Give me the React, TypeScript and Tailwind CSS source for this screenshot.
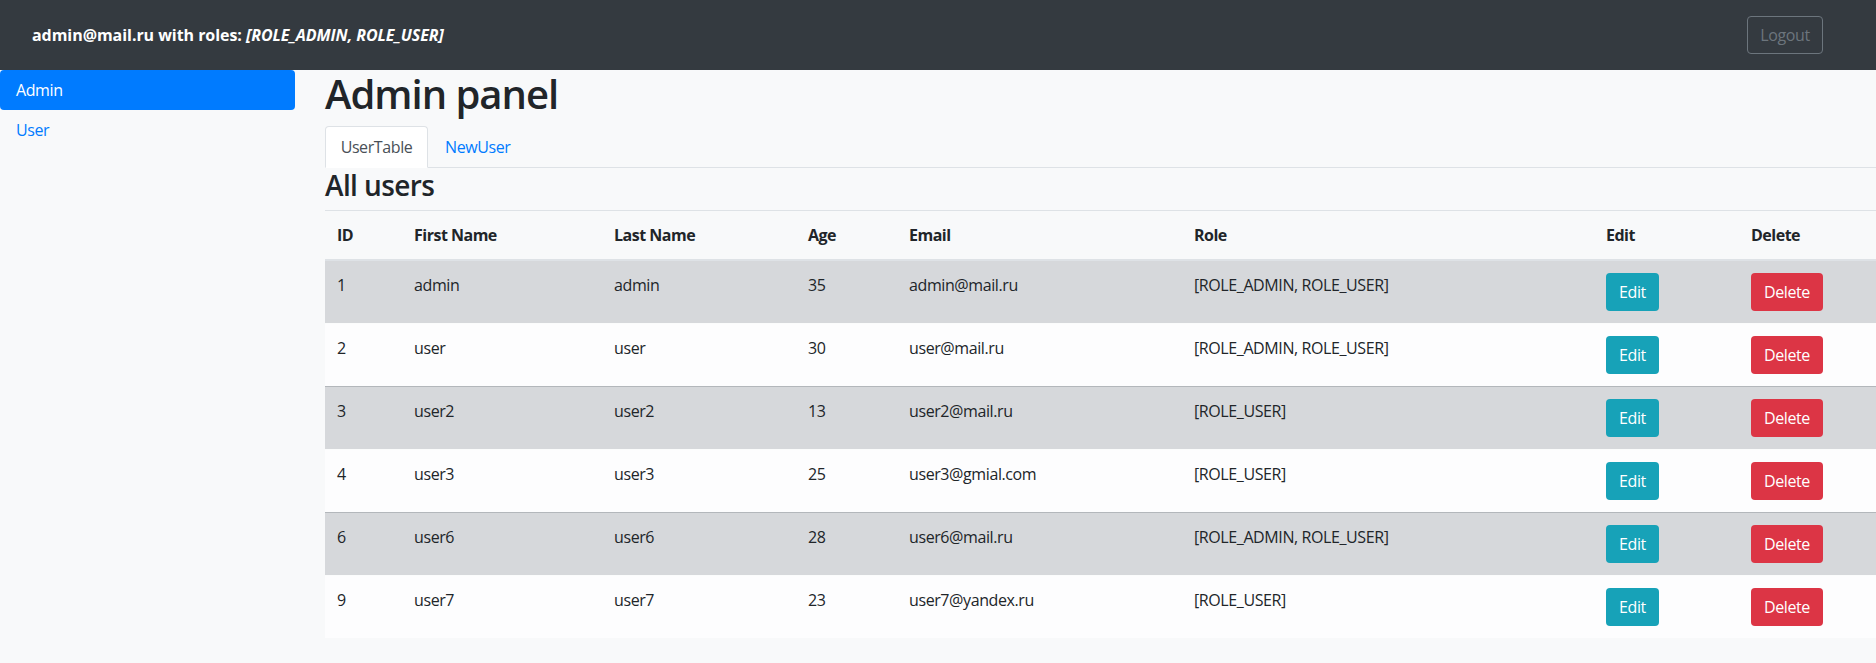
import React from "react";

const users = [
  { id: 1, first: "admin", last: "admin", age: 35, email: "admin@mail.ru", role: "[ROLE_ADMIN, ROLE_USER]" },
  { id: 2, first: "user", last: "user", age: 30, email: "user@mail.ru", role: "[ROLE_ADMIN, ROLE_USER]" },
  { id: 3, first: "user2", last: "user2", age: 13, email: "user2@mail.ru", role: "[ROLE_USER]" },
  { id: 4, first: "user3", last: "user3", age: 25, email: "user3@gmial.com", role: "[ROLE_USER]" },
  { id: 6, first: "user6", last: "user6", age: 28, email: "user6@mail.ru", role: "[ROLE_ADMIN, ROLE_USER]" },
  { id: 9, first: "user7", last: "user7", age: 23, email: "user7@yandex.ru", role: "[ROLE_USER]" },
];

export default function App() {
  return (
    <div className="min-h-screen bg-[#f8f9fa] text-[#212529] font-['Segoe_UI','Open_Sans',sans-serif] text-[16px] leading-6 tracking-[-0.4px]">
      <nav className="h-[70px] bg-[#343a40] flex items-center justify-between pl-[32px] pr-[53px]">
        <span className="text-white font-bold text-[16px] tracking-[-0.05px]">
          admin@mail.ru with roles: <i>[ROLE_ADMIN, ROLE_USER]</i>
        </span>
        <button className="h-[38px] w-[76px] border border-[#6c757d] rounded text-[#6c757d] text-[16px] flex items-center justify-center">
          Logout
        </button>
      </nav>
      <div className="flex">
        <aside className="w-[295px] shrink-0">
          <a className="block h-10 px-4 leading-10 bg-[#007bff] text-white rounded">Admin</a>
          <a className="block h-10 px-4 leading-10 text-[#007bff]">User</a>
        </aside>
        <main className="flex-1 ml-[30px] min-w-0">
          <h1 className="text-[40px] font-semibold leading-[48px] mb-2 tracking-[-1px]">Admin panel</h1>
          <div className="flex border-b border-[#dee2e6] h-[42px]">
            <div className="w-[103px] h-[42px] bg-white border border-[#dee2e6] border-b-white rounded-t flex items-center justify-center text-[#495057]">
              UserTable
            </div>
            <div className="h-[41px] px-[17px] flex items-center text-[#007bff]">NewUser</div>
          </div>
          <h3 className="text-[28px] font-semibold leading-[34px] mb-2 tracking-[-0.6px]">All users</h3>
          <table className="w-full table-fixed border-collapse">
            <colgroup>
              <col className="w-[77px]" />
              <col className="w-[200px]" />
              <col className="w-[194px]" />
              <col className="w-[101px]" />
              <col className="w-[285px]" />
              <col className="w-[412px]" />
              <col className="w-[145px]" />
              <col className="w-[137px]" />
            </colgroup>
            <thead>
              <tr>
                {["ID", "First Name", "Last Name", "Age", "Email", "Role", "Edit", "Delete"].map((h) => (
                  <th
                    key={h}
                    className="text-left font-bold p-3 align-bottom border-t border-[#dee2e6] border-b-2 tracking-[-0.5px]"
                  >
                    {h}
                  </th>
                ))}
              </tr>
            </thead>
            <tbody>
              {users.map((u, i) => {
                const gray = i % 2 === 0;
                const td = gray
                  ? "p-3 align-top border-t border-[#b3b7bb]"
                  : "p-3 align-top border-t border-[#fbfcfc]";
                return (
                  <tr key={u.id} className={gray ? "bg-[#d6d8db]" : "bg-[#fdfdfe]"}>
                    <td className={td}>{u.id}</td>
                    <td className={td}>{u.first}</td>
                    <td className={td}>{u.last}</td>
                    <td className={td}>{u.age}</td>
                    <td className={td}>{u.email}</td>
                    <td className={td}>{u.role}</td>
                    <td className={td}>
                      <button className="h-[38px] w-[53px] rounded bg-[#17a2b8] text-white flex items-center justify-center">
                        Edit
                      </button>
                    </td>
                    <td className={td}>
                      <button className="h-[38px] w-[72px] rounded bg-[#dc3545] text-white flex items-center justify-center">
                        Delete
                      </button>
                    </td>
                  </tr>
                );
              })}
            </tbody>
          </table>
        </main>
      </div>
    </div>
  );
}
